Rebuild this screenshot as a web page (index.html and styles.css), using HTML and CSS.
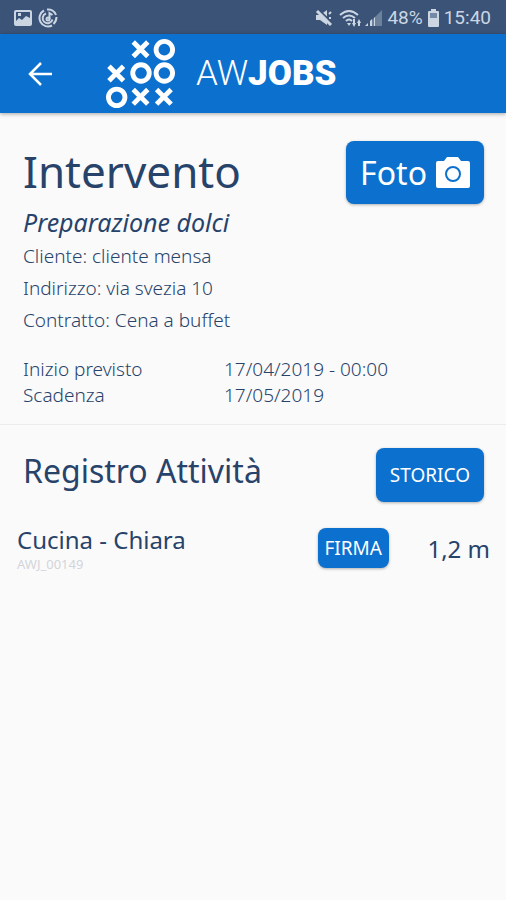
FILE: index.html
```html
<!DOCTYPE html>
<html lang="it">
<head>
<meta charset="utf-8">
<meta name="viewport" content="width=device-width, initial-scale=1">
<title>AWJobs - Intervento</title>
<link rel="stylesheet" href="styles.css">
</head>
<body>
<div class="status">
  <div class="status-group">
    <svg width="18" height="18" viewBox="0 0 18 18" aria-hidden="true"><path fill="currentColor" fill-rule="evenodd" d="M2 1h14q2 0 2 2v12q0 2-2 2H2q-2 0-2-2V3q0-2 2-2zM2 3v9l3-3 3 2 4-4 4 2V3zM4 4h3v3H4z"/></svg>
    <svg width="20" height="20" viewBox="0 0 20 20" fill="none" stroke="currentColor" stroke-width="2" aria-hidden="true"><path d="M6 2.500A8.500 8.500 0 1 0 14 17.500M9 1.500A8.500 8.500 0 0 1 18 7M18.500 9q0 4-3 7"/><path d="M8 5.500a5 5 0 1 0 6.500 6"/><circle cx="10" cy="11" r="1.500"/><path d="M11.500 11V5l3 2"/></svg>
  </div>
  <div class="status-group status-right">
    <svg width="18" height="18" viewBox="0 0 18 18" aria-hidden="true"><path fill="currentColor" d="M1 6h4l7-5v15l-7-5H1z"/><path stroke="#3a5377" stroke-width="2" d="M4 1l14 14"/><path stroke="currentColor" stroke-width="3" d="M2 2l14 14"/><path stroke="currentColor" stroke-width="2" d="M14 5l2-2M14 9h2"/></svg>
    <svg class="wifi" width="24" height="19" viewBox="0 0 24 19" fill="none" stroke="currentColor" stroke-width="2" aria-hidden="true"><path d="M1 6q9-8 18 0M4 9q6-5 12 0M7 12q3-3 6 0"/><path fill="currentColor" stroke="none" d="M8 14h4l-2 3zM13 14h1V10h2v4h1l-2 4zM18 14l2-4 2 4h-1v3h-2v-3z"/></svg>
    <svg width="18" height="18" viewBox="0 0 18 18" fill="currentColor" aria-hidden="true"><path opacity=".35" d="M6 12l11-11v16H6z"/><path d="M0 17l3-3v3zM5 12l2-2v7H5zM9 9l1-1v9H9z"/></svg>
    <span>48%</span>
    <svg width="13" height="18" viewBox="0 0 13 18" aria-hidden="true"><path fill="currentColor" d="M4 0h5v2h2q1 0 1 1v14q0 1-1 1H2q-1 0-1-1V3q0-1 1-1h2z"/><path fill="#7389a6" d="M3 4h7v5H3z"/></svg>
    <span>15:40</span>
  </div>
</div>
<header class="appbar">
  <button class="back" aria-label="Indietro"><svg width="24" height="24" viewBox="0 0 24 24" fill="none" stroke="currentColor" stroke-width="2.500" aria-hidden="true"><path d="M24 12H2M13 1L2 12l11 11"/></svg></button>
  <svg class="mark" width="70" height="70" viewBox="0 0 72 72" fill="none" stroke="currentColor" stroke-width="5" aria-hidden="true">
    <circle cx="60" cy="11" r="8.500"/><circle cx="36" cy="35" r="8.500"/><circle cx="60" cy="35" r="8.500"/><circle cx="11" cy="60" r="8.500"/>
    <path d="M28 3l15 15m0-15L28 18M3 28l15 15m0-15L3 43M28 52l15 15m0-15L28 67M52 52l15 15m0-15L52 67"/>
  </svg>
  <span class="brand">AW<b>JOBS</b></span>
</header>
<main>
  <section class="job">
    <div class="job-head">
      <h1>Intervento</h1>
      <button class="btn btn-photo">Foto <svg width="36" height="32" viewBox="0 0 36 32" aria-hidden="true"><path fill="currentColor" d="M3 4h6l3-4h11l3 4h7q2 0 2 2v23q0 2-2 2H3q-2 0-2-2V6q0-2 2-2z"/><circle cx="18" cy="17" r="7" fill="none" stroke="#0b70ce" stroke-width="2"/></svg></button>
    </div>
    <p class="subtitle">Preparazione dolci</p>
    <p class="line">Cliente: cliente mensa</p>
    <p class="line">Indirizzo: via svezia 10</p>
    <p class="line">Contratto: Cena a buffet</p>
    <dl class="dates">
      <dt>Inizio previsto</dt><dd>17/04/2019 - 00:00</dd>
      <dt>Scadenza</dt><dd>17/05/2019</dd>
    </dl>
  </section>
  <section>
    <div class="log-head">
      <h2>Registro Attività</h2>
      <button class="btn btn-history">STORICO</button>
    </div>
    <div class="entry">
      <div class="entry-text">
        <div class="entry-name">Cucina - Chiara</div>
        <div class="entry-code">AWJ_00149</div>
      </div>
      <button class="btn btn-sign">FIRMA</button>
      <span class="duration">1,2 m</span>
    </div>
  </section>
</main>
</body>
</html>
```
FILE: styles.css
```css
* { box-sizing: border-box; }
body {
  margin: 0;
  min-height: 100vh;
  background: #fafafa;
  color: #28436a;
  font-family: "Noto Sans", "Open Sans", sans-serif;
}
h1, h2, p, dl, dd { margin: 0; font-weight: 400; }
button { font-family: inherit; border: 0; padding: 0; cursor: pointer; }
svg { display: block; flex: none; }

.status {
  display: flex;
  justify-content: space-between;
  align-items: center;
  height: 34px;
  padding: 2px 15px 0 14px;
  background: #3a5377;
  color: #ccd6e3;
  font: 19px/24px Roboto, sans-serif;
}
.status-group { display: flex; align-items: center; gap: 6px; }
.status-right { gap: 4px; }
.wifi { margin: 0 -2px 0 2px; }

.appbar {
  display: flex;
  align-items: center;
  height: 79px;
  padding: 0 28px;
  background: #0b70ce;
  color: #fff;
  box-shadow: 0 1px 4px rgba(0, 0, 0, .35);
}
.back { background: none; color: inherit; }
.mark { margin: 0 20px 0 54px; }
.brand { font: 300 35px/40px Roboto, sans-serif; }
.brand b { font-weight: 900; }

.job { padding: 28px 23px 16px; border-bottom: 1px solid #ececec; }
.job-head, .log-head {
  display: flex;
  justify-content: space-between;
  align-items: flex-start;
}
h1 { font-size: 44px; line-height: 60px; }
h2 { font-size: 32px; line-height: 46px; }
.btn {
  background: #0b70ce;
  color: #fff;
  border-radius: 8px;
  box-shadow: 0 1px 3px rgba(0, 0, 0, .3);
}
.job-head .btn, .log-head .btn { margin-right: -1px; }
.btn-photo {
  display: flex;
  align-items: center;
  gap: 8px;
  height: 63px;
  padding: 0 13px 0 14px;
  font-size: 32px;
}
.subtitle { font-size: 25px; line-height: 36px; font-style: italic; }
.line, .dates, .dates dd { font-size: 19px; font-weight: 300; }
.line { line-height: 32px; }
.dates {
  display: grid;
  grid-template-columns: 201px 1fr;
  margin-top: 20px;
  line-height: 26px;
}
.log-head { padding: 23px 23px 22px; }
.btn-history { height: 54px; padding: 0 14px; font-size: 19px; }
.entry { display: flex; align-items: center; padding: 0 16px 0 17px; }
.entry-text { flex: 1; }
.entry-name { font-size: 24px; line-height: 32px; }
.entry-code { font-size: 13px; line-height: 16px; color: #d3d5da; }
.btn-sign { height: 40px; padding: 0 7px; font-size: 19px; }
.duration { min-width: 101px; text-align: right; font-size: 24px; }
```
